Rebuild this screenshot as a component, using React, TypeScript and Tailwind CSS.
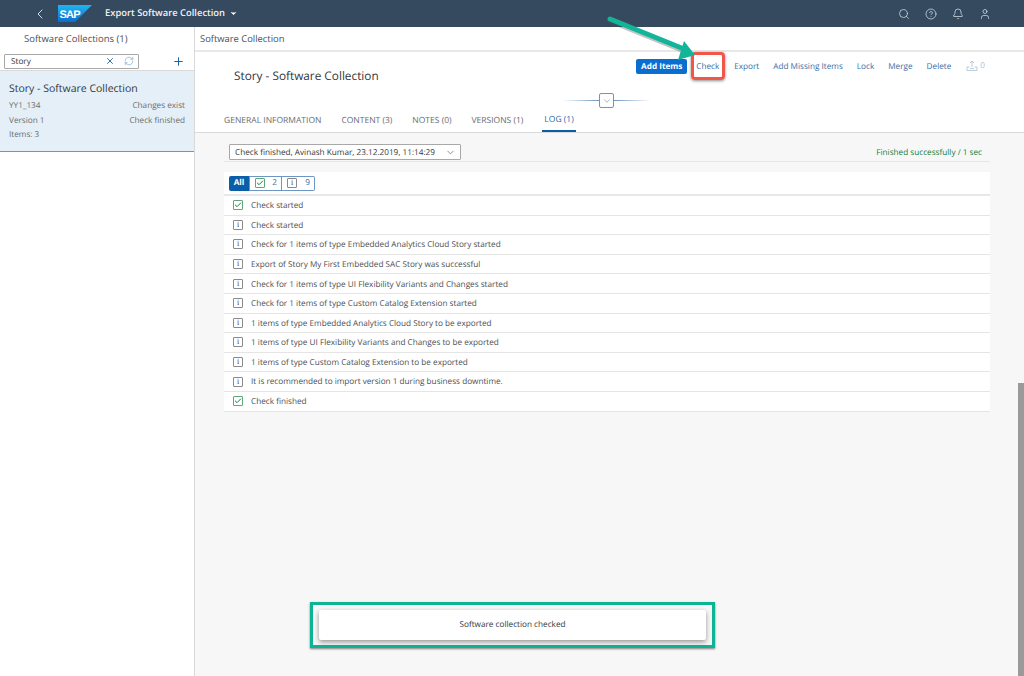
import { ChevronDown, ChevronLeft, Plus, X, RefreshCw, Search, CircleHelp, Bell, User, Check } from "lucide-react";

const rows = [
  { ok: true, text: "Check started" },
  { ok: false, text: "Check started" },
  { ok: false, text: "Check for 1 items of type Embedded Analytics Cloud Story started" },
  { ok: false, text: "Export of Story My First Embedded SAC Story was successful" },
  { ok: false, text: "Check for 1 items of type UI Flexibility Variants and Changes started" },
  { ok: false, text: "Check for 1 items of type Custom Catalog Extension started" },
  { ok: false, text: "1 items of type Embedded Analytics Cloud Story to be exported" },
  { ok: false, text: "1 items of type UI Flexibility Variants and Changes to be exported" },
  { ok: false, text: "1 items of type Custom Catalog Extension to be exported" },
  { ok: false, text: "It is recommended to import version 1 during business downtime." },
  { ok: true, text: "Check finished" },
];

const tabs = ["GENERAL INFORMATION", "CONTENT (3)", "NOTES (0)", "VERSIONS (1)"];
const actions = ["Export", "Add Missing Items", "Lock", "Merge", "Delete"];

function StatusIcon({ ok }: { ok: boolean }) {
  if (ok) {
    return (
      <span className="w-[10px] h-[10px] border border-[#5fa777] rounded-[1px] flex items-center justify-center">
        <Check className="w-[8px] h-[8px] text-[#107e3e]" strokeWidth={3} />
      </span>
    );
  }
  return (
    <span className="w-[10px] h-[10px] border border-[#8a8a8a] rounded-[1px] flex items-center justify-center text-[8px] leading-none text-[#444] font-['Liberation_Serif',serif]">
      i
    </span>
  );
}

function SapLogo() {
  return (
    <svg width="34" height="17" viewBox="0 0 34 17">
      <defs>
        <linearGradient id="sapg" x1="0" y1="0" x2="0" y2="1">
          <stop offset="0" stopColor="#1fb6f0" />
          <stop offset="1" stopColor="#0a6ed1" />
        </linearGradient>
      </defs>
      <path d="M0 0H34L17 17H0Z" fill="url(#sapg)" />
      <text x="1.5" y="12.5" fontSize="11" fontWeight="700" fill="#fff" fontFamily="Liberation Sans, sans-serif" textLength="21">
        SAP
      </text>
    </svg>
  );
}

export default function App() {
  return (
    <div className="relative w-[1024px] h-[676px] overflow-hidden flex flex-col bg-white text-[#32363a] font-['Open_Sans',sans-serif] [text-rendering:geometricPrecision]">
      {/* shell bar */}
      <header className="h-[27px] shrink-0 bg-[#354a5f] flex items-center text-white">
        <ChevronLeft className="w-[16px] h-[16px] ml-[32px] text-[#d5dde5]" strokeWidth={1.5} />
        <div className="ml-[10px]">
          <SapLogo />
        </div>
        <span className="ml-[13px] text-[9.4px] font-semibold text-[#eef1f4]">Export Software Collection</span>
        <ChevronDown className="w-[9px] h-[9px] ml-[4px] fill-white" strokeWidth={2} />
        <div className="ml-auto mr-[33px] flex items-center gap-[15px] text-[#d5dde5]">
          <Search className="w-[12px] h-[12px]" strokeWidth={1.5} />
          <CircleHelp className="w-[12px] h-[12px]" strokeWidth={1.5} />
          <Bell className="w-[12px] h-[12px]" strokeWidth={1.5} />
          <User className="w-[12px] h-[12px]" strokeWidth={1.5} />
        </div>
      </header>

      <div className="flex flex-1 min-h-0">
        {/* master list */}
        <aside className="w-[195px] shrink-0 border-r border-[#d9d9d9] bg-white">
          <div className="h-[25px] pl-[24px] flex items-center text-[9.5px] text-[#4a4f54]">Software Collections (1)</div>
          <div className="h-[18px] pl-[4px] pr-[9px] flex items-center justify-between">
            <div className="w-[135px] h-[15px] border border-[#a8a8a8] rounded-[1px] flex items-center pl-[6px] pr-[4px] text-[8.2px]">
              <span className="pt-[2px]">Story</span>
              <X className="w-[10px] h-[10px] ml-auto text-[#0a5ea8]" strokeWidth={2} />
              <RefreshCw className="w-[10px] h-[10px] ml-[9px] text-[#5b8fc7]" strokeWidth={1.25} />
            </div>
            <Plus className="w-[13px] h-[13px] text-[#0a5ea8]" strokeWidth={1.75} />
          </div>
          <div className="h-[82px] bg-[#e5eff8] border-t border-[#d9d9d9] border-b border-b-[#6b97c2] px-[9px] pt-[10px]">
            <div className="text-[10.5px] leading-[16px]">Story - Software Collection</div>
            <div className="mt-[2px] text-[8.2px] leading-[14.6px] text-[#6a6d70]">
              <div className="flex justify-between">
                <span>YY1_134</span>
                <span>Changes exist</span>
              </div>
              <div className="flex justify-between">
                <span>Version 1</span>
                <span>Check finished</span>
              </div>
              <div>Items: 3</div>
            </div>
          </div>
        </aside>

        {/* detail */}
        <main className="flex-1 min-w-0 flex flex-col bg-[#f7f7f7]">
          <div className="h-[25px] shrink-0 bg-white border-b-2 border-[#e8e8e8] pl-[5px] pt-[2px] flex items-center text-[9.4px] text-[#4a4f54]">
            Software Collection
          </div>
          <section className="h-[81px] shrink-0 bg-white border-b border-[#d9d9d9] flex flex-col">
            <div className="flex items-start justify-between pl-[39px] pr-[39px] pt-[6px]">
              <div className="pt-[10px] text-[11.8px] leading-[16px]">Story - Software Collection</div>
              <div className="flex items-center h-[16px] text-[8.2px] text-[#3a6ea5]">
                <span className="h-[15px] w-[51px] rounded-[2px] bg-[#0a6ed1] text-white font-bold flex items-center justify-center pt-[2px]">Add Items</span>
                <span className="ml-[9px] pt-[2px]">Check</span>
                <div className="ml-[15px] flex gap-[14px] pt-[2px]">
                  {actions.map((a) => (
                    <span key={a}>{a}</span>
                  ))}
                </div>
                <span className="ml-[15px] flex items-center gap-[2px] text-[#a9bfd6]">
                  <svg width="12" height="12" viewBox="0 0 12 12" fill="none" stroke="#a9bfd6" strokeWidth="0.8">
                    <path d="M6 1v6M4 3l2-2 2 2M3.5 7H1v3.5h10V7H8.5M4 8.5h4" />
                  </svg>
                  0
                </span>
              </div>
            </div>
            <div className="mt-[9px] flex items-center justify-center pr-[6px]">
              <div className="w-[37px] h-px bg-gradient-to-r from-transparent to-[#6b97c2]" />
              <div className="w-[15px] h-[15px] border border-[#6b97c2] rounded-[2px] flex items-center justify-center">
                <ChevronDown className="w-[10px] h-[10px] text-[#3a6ea5]" strokeWidth={1.25} />
              </div>
              <div className="w-[37px] h-px bg-gradient-to-r from-[#6b97c2] to-transparent" />
            </div>
            <div className="mt-auto flex pl-[29px] text-[8.5px] text-[#6a6d70]">
              <div className="flex gap-[20px]">
                {tabs.map((t) => (
                  <span key={t} className="h-[24px] pt-[2px] flex items-center">
                    {t}
                  </span>
                ))}
              </div>
              <span className="ml-[19px] h-[24px] pt-[2px] flex items-center text-[#2a6bb0] border-b-2 border-[#0a5ea8] px-[2px]">LOG (1)</span>
            </div>
          </section>

          <div className="ml-[29px] mr-[34px] mt-[11px] pl-[5px] pb-[1px] h-[18px] flex items-center justify-between border-b border-[#e5e5e5] text-[8.2px]">
            <div className="w-[232px] h-[16px] bg-white border border-[#a8a8a8] rounded-[1px] flex items-center pl-[5px] pr-[4px]">
              <span className="pt-[2px]">Check finished, Avinash Kumar, 23.12.2019, 11:14:29</span>
              <ChevronDown className="w-[11px] h-[11px] ml-auto text-[#3a6ea5]" strokeWidth={1.5} />
            </div>
            <span className="pr-[8px] pt-[2px] text-[#107e3e]">Finished successfully / 1 sec</span>
          </div>

          <div className="ml-[29px] mr-[34px] mt-[10px] bg-white text-[8.2px]">
            <div className="h-[24px] pl-[5px] flex items-center border-b-2 border-[#e8e8e8]">
              <span className="h-[15px] w-[20px] bg-[#0a5ea8] rounded-l-[2px] text-white font-bold flex items-center justify-center">All</span>
              <span className="h-[15px] w-[33px] border border-[#6b97c2] flex items-center pl-[5px] text-[#3a6ea5]">
                <StatusIcon ok />
                <span className="ml-auto pr-[4px]">2</span>
              </span>
              <span className="h-[15px] w-[33px] border border-l-0 border-[#6b97c2] rounded-r-[2px] flex items-center pl-[5px] text-[#3a6ea5]">
                <StatusIcon ok={false} />
                <span className="ml-auto pr-[4px]">9</span>
              </span>
            </div>
            {rows.map((r, i) => (
              <div key={i} className="h-[19.6px] pl-[9px] flex items-center gap-[8px] border-b border-[#e5e5e5] text-[#4a4f54]">
                <StatusIcon ok={r.ok} />
                <span className="pt-[2px]">{r.text}</span>
              </div>
            ))}
          </div>
        </main>
      </div>

      {/* scrollbar thumb */}
      <div className="absolute right-0 top-[383px] bottom-0 w-[6px] bg-[#9a9a9a]" />

      {/* annotation: highlight around Check */}
      <div className="absolute left-[691px] top-[52px] w-[34px] h-[28px] border-[3px] border-[#f0564a] rounded-[4px] shadow-[0_1px_3px_rgba(0,0,0,0.45)]" />

      {/* annotation: arrow */}
      <svg className="absolute left-[600px] top-[10px]" width="100" height="60" viewBox="0 0 100 60">
        <path d="M10 10 L84 40" stroke="#555" strokeWidth="5" strokeLinecap="round" opacity="0.35" transform="translate(0 1)" />
        <path d="M10 9 L84 39" stroke="#12b59a" strokeWidth="5" strokeLinecap="round" />
        <path d="M84 31 L95 45 L78 50 Z" fill="#12b59a" />
      </svg>

      {/* toast */}
      <div className="absolute left-[310px] top-[602px] w-[405px] h-[46px] border-[3px] border-[#0db395] shadow-[0_1px_2px_rgba(0,0,0,0.5)] flex items-center justify-center">
        <div className="w-[387px] h-[30px] bg-white rounded-[2px] shadow-[0_2px_5px_rgba(0,0,0,0.4)] flex items-center justify-center text-[8.2px] text-[#32363a]">
          Software collection checked
        </div>
      </div>
    </div>
  );
}
